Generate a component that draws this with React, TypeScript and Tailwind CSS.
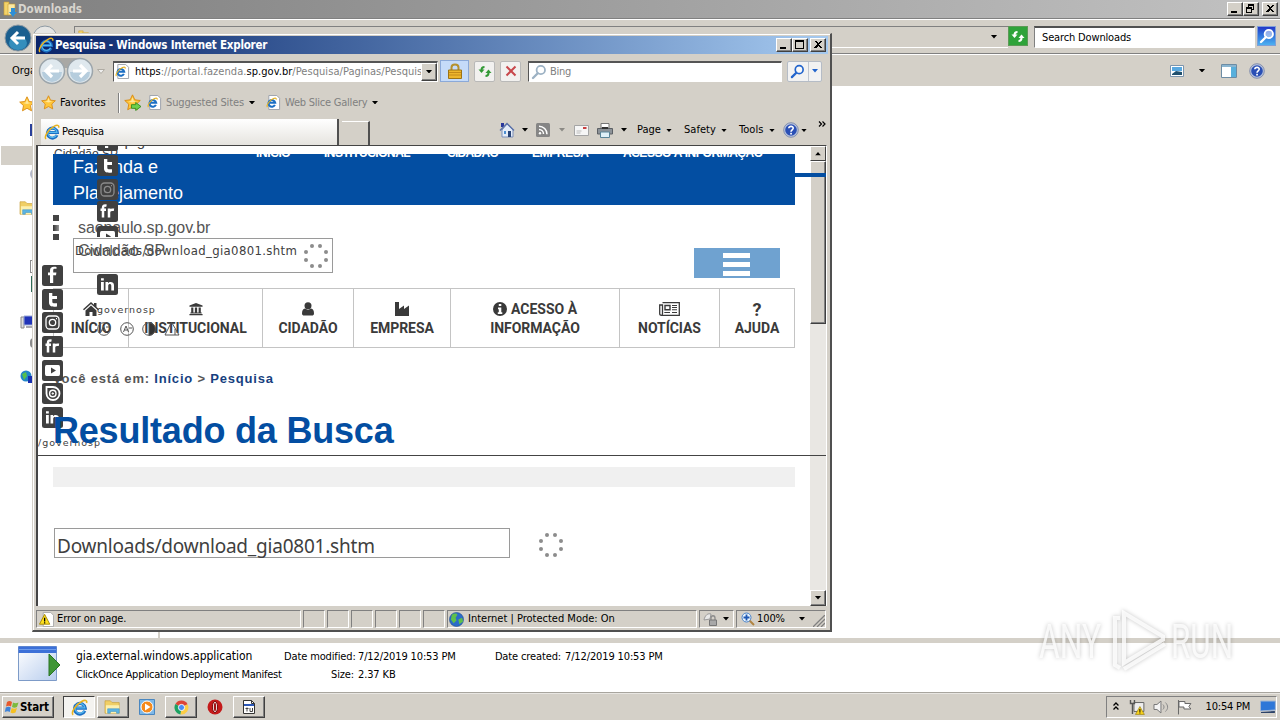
import type { ReactNode } from "react";
import clsx from "clsx";

type IconProps = { className?: string };

function IeIcon({ className }: IconProps) {
  return (
    <svg viewBox="0 0 16 16" className={clsx("shrink-0", className)}>
      <path d="M13 11.2A5 5 0 1 1 13.4 8.6H4.5" fill="none" stroke="#1c6fc4" strokeWidth="3" />
      <path d="M12.6 10.8A4.6 4.6 0 1 1 13 8.3H5" fill="none" stroke="#55b8ee" strokeWidth="1.2" />
      <path d="M2 15C-.5 12.5 5 5 10 2.300c3-1.600 5.500-1.300 4.600 1.400" fill="none" stroke="#e9b320" strokeWidth="1.500" />
    </svg>
  );
}

function IePageIcon({ className }: IconProps) {
  return (
    <svg viewBox="0 0 16 16" className={clsx("shrink-0", className)}>
      <path d="M3 .5h8.500l3 3v12H3z" fill="#fff" stroke="#9aa0aa" />
      <path d="M9.500 10.500A3.600 3.600 0 1 1 9.800 8.300H3.500" fill="none" stroke="#1c6fc4" strokeWidth="2.200" />
      <path d="M1.500 13C0 11 4 5.500 8 3.800c2-.8 3.300-.5 2.800 1.200" fill="none" stroke="#e9b320" strokeWidth="1.200" />
    </svg>
  );
}

function FolderIcon({ className }: IconProps) {
  return (
    <svg viewBox="0 0 16 16" className={clsx("shrink-0", className)}>
      <path d="M2 1h5v13H2z" fill="#f3d36b" stroke="#c99a2c" strokeWidth=".6" />
      <path d="M6 3h7v11H6z" fill="#fbe9a3" stroke="#c99a2c" strokeWidth=".6" />
      <path d="M9 7h4v4h2l-4 5-4-5h2z" fill="#2f8fd6" />
    </svg>
  );
}

function OpenFolderIcon({ className }: IconProps) {
  return (
    <svg viewBox="0 0 20 18" className={clsx("shrink-0", className)}>
      <path d="M1 2h6l2 2h8v12H1z" fill="#f0cf66" stroke="#c79b35" strokeWidth=".7" />
      <path d="M2 7h15v9H2z" fill="#fdf0ae" />
      <path d="M4 16v-5h13v5h-3v-2H7v2z" fill="#5db5e4" stroke="#3a8fc4" strokeWidth=".6" />
    </svg>
  );
}

function StarIcon({ className, add }: IconProps & { add?: boolean }) {
  return (
    <svg viewBox="0 0 16 16" className={clsx("shrink-0", className)}>
      <path d="M8 .8l2.200 4.700 5.100.6-3.800 3.500 1 5.200L8 12.300l-4.500 2.500 1-5.200L.7 6.100l5.100-.6z" fill="#ffc63a" stroke="#d98a13" strokeWidth=".9" />
      <path d="M8 3l1.300 3.500 2.700.4-4 1.100-4-1 2.700-.5z" fill="#ffe79a" />
      {add && <path d="M7 10h4V8l5 3.800-5 3.700v-2H7z" fill="#6fd04c" stroke="#2f8a1b" strokeWidth=".8" />}
    </svg>
  );
}

function HelpIcon({ className }: IconProps) {
  return (
    <svg viewBox="0 0 16 16" className={clsx("shrink-0", className)}>
      <circle cx="8" cy="8" r="7.300" fill="#b9c4dc" stroke="#7482a6" strokeWidth=".8" />
      <circle cx="8" cy="8" r="5.800" fill="#2a4fb5" />
      <path d="M5.800 6.300C6 3.600 10.400 3.800 10.200 6.300 10.100 7.800 8 7.900 8 9.700" fill="none" stroke="#fff" strokeWidth="1.600" />
      <rect x="7.200" y="10.800" width="1.700" height="1.700" fill="#fff" />
    </svg>
  );
}

function Caret({ className }: IconProps) {
  return (
    <svg viewBox="0 0 7 4" className={clsx("h-[3.500px] w-[6px] shrink-0", className)}>
      <path d="M0 0h7L3.500 4z" fill="currentColor" />
    </svg>
  );
}

function RefreshArrows({ className }: IconProps) {
  return (
    <svg viewBox="0 0 16 16" className={clsx("shrink-0", className)}>
      <path d="M7.500 4C5.500 4 4.500 5 4.500 7" fill="none" stroke="currentColor" strokeWidth="2" />
      <path d="M1.500 6.500h6L4.500 10z" fill="currentColor" />
      <path d="M8.500 13c2 0 3-1 3-3" fill="none" stroke="currentColor" strokeWidth="2" />
      <path d="M8.500 10h6l-3-3.500z" fill="currentColor" />
    </svg>
  );
}

function Magnifier({ className }: IconProps) {
  return (
    <svg viewBox="0 0 16 16" className={clsx("shrink-0", className)}>
      <path d="M7 9l-5 5" stroke="currentColor" strokeWidth="2.400" strokeLinecap="round" />
      <circle cx="9.800" cy="6" r="4.200" fill="#fff" fillOpacity=".5" stroke="currentColor" strokeWidth="1.800" />
    </svg>
  );
}

function WinButton({ kind, className }: { kind: "min" | "max" | "restore" | "close"; className?: string }) {
  return (
    <span
      className={clsx(
        "flex h-[14px] w-4 shrink-0 items-center justify-center border border-t-white border-r-[#404040] border-b-[#404040] border-l-white bg-[#d4d0c8] shadow-[inset_-1px_-1px_0_#808080]",
        className,
      )}
    >
      <svg viewBox="0 0 14 12" className="h-3 w-[14px]" shapeRendering="crispEdges">
        {kind === "min" && <path d="M3 8h6v2H3z" />}
        {kind === "max" && <path d="M2 1h9v9H2zM3 3v6h7V3z" fillRule="evenodd" />}
        {kind === "restore" && <path d="M4 1h6v6H8V6h1V3H5v1H4zM2 4h6v6H2zM3 6v3h4V6z" fillRule="evenodd" />}
        {kind === "close" && <path d="M3 2h2l2 2 2-2h2L8 5l3 4H9L7 7 5 9H3l3-4z" />}
      </svg>
    </span>
  );
}

function Explorer() {
  return (
    <div className="flex h-[694px] flex-col bg-[#d4d0c8]">
      <div className="flex h-[18px] items-center bg-linear-to-r from-[#808080] to-[#c2c2c2] pr-[2px] pl-[2px]">
        <FolderIcon className="size-4" />
        <span className="w-40 pt-px text-[11.500px] font-bold tracking-[0.020px] text-[#d8d5ce]">Downloads</span>
        <WinButton kind="min" className="ml-auto" />
        <WinButton kind="restore" />
        <WinButton kind="close" className="ml-[3px]" />
      </div>

      <div className="flex h-[37px] items-start border-t border-b border-t-[#808080] border-b-white px-[2px] shadow-[inset_0_1px_0_#fff,inset_0_-1px_0_#808080]">
        <svg viewBox="0 0 56 28" className="mt-[5px] h-7 w-14">
          <circle cx="16" cy="14" r="13" fill="#1b5f8f" stroke="#8e9aa4" />
          <ellipse cx="16" cy="19" rx="9" ry="7" fill="#3fa3cf" opacity=".7" />
          <path d="M23 14H10m6-6l-6 6 6 6" fill="none" stroke="#fff" strokeWidth="3" />
          <circle cx="43" cy="14" r="12" fill="#e6e6e4" stroke="#8e9aa4" />
        </svg>
        <div className="mt-[7px] ml-4 flex h-[22px] w-[934px] items-center border-t border-b border-l border-t-[#808080] border-b-white border-l-[#808080] pl-[2px] text-[11px]">
          <FolderIcon className="size-3.5" />
          <span className="ml-6 w-40 pt-[3px]">▸ admin ▸ Downloads ▸</span>
          <Caret className="mr-[10px] ml-auto h-1 w-[8px]" />
        </div>
        <span className="mt-[7px] flex h-5 w-5 items-center justify-center border border-[#5c9a57] bg-[#2fa33a] text-white">
          <RefreshArrows className="size-4" />
        </span>
        <div className="mt-[7px] ml-[6px] flex h-[22px] w-[221px] items-center border border-t-2 border-[#808080] border-r-white border-b-white border-t-[#505050] bg-white pl-[7px] text-[11px]">
          <span className="pt-px tracking-[-0.150px]">Search Downloads</span>
        </div>
        <span className="mt-[7px] ml-[2px] flex h-5 w-[19px] items-center justify-center border border-[#7e9fd6] bg-linear-to-b from-[#2536c8] to-[#4eb0f0] text-white">
          <Magnifier className="size-4" />
        </span>
      </div>

      <div className="flex h-[31px] items-center pr-[15px] pl-3 text-[11px]">
        <span className="pt-px">Organize</span>
        <svg viewBox="0 0 14 12" className="ml-auto h-3 w-[14px]">
          <path d="M.5.5h13v11H.5z" fill="#fff" stroke="#7c95ad" />
          <path d="M2 2h10v4H2z" fill="#58a8e0" />
          <path d="M2 9l4-3 6 1v3H2z" fill="#20506e" />
        </svg>
        <Caret className="mx-[14px] h-1 w-[8px]" />
        <svg viewBox="0 0 16 14" className="ml-[1px] h-[14px] w-4">
          <path d="M.5.5h15v13H.5z" fill="#fff" stroke="#6c8ca4" />
          <path d="M1 1h14v2H1z" fill="#8ab5d0" />
          <path d="M10 3h5v10h-5z" fill="#58b0dc" />
        </svg>
        <HelpIcon className="ml-3 size-4" />
      </div>

      <div className="flex grow bg-white">
        <div className="flex w-[160px] flex-col border-r-2 border-[#d4d0c8]">
          <StarIcon className="mt-[10px] ml-[19px] size-4" />
          <div className="mt-3 ml-[30px] h-3 w-4 bg-[#2a3f9a]" />
          <div className="mt-[10px] ml-px h-[19px] bg-[#d4d0c8]" />
          <div className="mt-[3px] ml-[30px] size-3 rounded-full bg-[#b4b8c8]" />
          <OpenFolderIcon className="mt-[20px] ml-[19px] h-4 w-[18px]" />
          <div className="mt-[44px] ml-[30px] h-[13px] w-3 border border-[#8c8c8c]" />
          <div className="mt-[3px] ml-[31px] h-4 w-3 bg-[#2f6b57]" />
          <svg viewBox="0 0 16 16" className="mt-[22px] ml-[20px] size-4">
            <path d="M1 3h3v11H1z" fill="#ddd" stroke="#888" />
            <path d="M4 2h11v9H4z" fill="#2033b8" stroke="#9cabd8" />
            <path d="M6 12h8v2H6z" fill="#a8a8b0" />
          </svg>
          <div className="mt-[8px] ml-[30px] size-2.5 rounded bg-[#8a8a8a]" />
          <svg viewBox="0 0 16 16" className="mt-[22px] ml-[20px] size-4">
            <circle cx="6" cy="6" r="5.500" fill="#2285c8" />
            <path d="M2 4l4-2 1 4-3 4z" fill="#58c04c" />
            <path d="M8 6h8v7H8z" fill="#1930b0" />
          </svg>
        </div>
      </div>

      <div className="h-[5px] bg-[#d4d0c8]" />
      <div className="flex h-[49px] bg-white text-[11px]">
        <svg viewBox="0 0 44 36" className="mt-[3px] ml-[18px] h-9 w-11">
          <defs>
            <linearGradient id="app-body" x1="0" y1="0" x2="1" y2="1">
              <stop offset="0" stopColor="#fff" />
              <stop offset="1" stopColor="#b8cdee" />
            </linearGradient>
          </defs>
          <path d="M.5.5h38v34H.5z" fill="url(#app-body)" stroke="#7d9bc8" />
          <path d="M.5.500h38V7H.5z" fill="#3c70d8" />
          <path d="M1 3h37v1H1z" fill="#6f9cea" />
          <path d="M31 8l11 11-11 11z" fill="#3f9636" stroke="#2b7425" />
        </svg>
        <div className="ml-[14px] flex w-[208px] flex-col pt-[4px]">
          <span className="h-[19px] text-[12px] leading-[18px] whitespace-nowrap tracking-[-0.030px]">gia.external.windows.application</span>
          <span className="h-[18px] leading-[18px] whitespace-nowrap tracking-[-0.270px]">ClickOnce Application Deployment Manifest</span>
        </div>
        <div className="grid grid-cols-[70px_132px_67px_120px] content-start gap-x-1 pt-[5px] leading-[18px] whitespace-nowrap tracking-[-0.130px]">
          <span className="text-right">Date modified:</span>
          <span>7/12/2019 10:53 PM</span>
          <span className="text-right">Date created:</span>
          <span>7/12/2019 10:53 PM</span>
          <span className="text-right">Size:</span>
          <span>2.37 KB</span>
        </div>
      </div>
      <div className="h-[2px] border-t border-[#a8a59e] bg-[#e8e6e2]" />
    </div>
  );
}

function TaskButton({ children, active, flat }: { children: ReactNode; active?: boolean; flat?: boolean }) {
  return (
    <span
      className={clsx(
        "flex h-[22px] w-[32px] items-center justify-center",
        active && "border border-t-[#404040] border-r-white border-b-white border-l-[#404040] bg-[#f4f3f0]",
        !active && !flat && "border border-t-white border-r-[#404040] border-b-[#404040] border-l-white shadow-[inset_-1px_-1px_0_#808080]",
      )}
    >
      {children}
    </span>
  );
}

function Taskbar() {
  return (
    <div className="flex h-[26px] items-start bg-[#d4d0c8] pt-[2px] pl-[2px]">
      <div className="flex h-[22px] w-[52px] items-center border border-t-white border-r-[#404040] border-b-[#404040] border-l-white pl-px shadow-[inset_-1px_-1px_0_#808080]">
        <svg viewBox="0 0 16 16" className="size-4 shrink-0">
          <path d="M3 3c2-1.500 3.500-1 5 0L7 7.500C5.500 6.500 4 6.500 2 7.500z" fill="#e8592b" />
          <path d="M9 3.500c1.500 1 3.500 1 5.500 0L13 8c-2 1-3.500.8-5 0z" fill="#7cba3c" />
          <path d="M1.800 8.500c2-1 3.500-1 5 0l-1 4.500c-1.500-1-3-1-5 0z" fill="#3f83d8" />
          <path d="M7.700 9c1.500 1 3.300 1 5.300 0l-1.500 4.500c-2 1-3.500 1-5 0z" fill="#f5c021" />
        </svg>
        <span className="pt-px text-[11.500px] font-bold tracking-[-0.100px]">Start</span>
      </div>
      <div className="ml-[9px] flex gap-[2px]">
        <TaskButton active><IeIcon className="size-[17px]" /></TaskButton>
        <TaskButton><OpenFolderIcon className="h-4 w-[18px]" /></TaskButton>
        <TaskButton flat>
          <svg viewBox="0 0 16 16" className="size-4">
            <path d="M.5.5h15v15H.5z" fill="#7db8e8" stroke="#4a87c0" />
            <circle cx="8" cy="8" r="6" fill="#f58a1c" stroke="#fff" />
            <path d="M6 4.500L11.500 8 6 11.500z" fill="#fff" />
          </svg>
        </TaskButton>
        <TaskButton>
          <svg viewBox="0 0 16 16" className="size-[15px]">
            <path d="M8 8L1.500 4.200A7.500 7.500 0 0 1 14.500 4.500z" fill="#dd4437" />
            <path d="M8 8L1.500 4.200a7.500 7.500 0 0 0 5.500 11.200z" fill="#1da261" />
            <path d="M8 8l6.500-3.500A7.500 7.500 0 0 1 7 15.400z" fill="#fccd44" />
            <circle cx="8" cy="8" r="3.300" fill="#4a8cf5" stroke="#fff" />
          </svg>
        </TaskButton>
        <TaskButton flat>
          <svg viewBox="0 0 16 16" className="size-4">
            <circle cx="8" cy="8" r="7.500" fill="#c41a1a" />
            <ellipse cx="8" cy="8" rx="2.600" ry="5.600" fill="#f2e6e6" stroke="#7c0b0b" />
            <ellipse cx="8" cy="8" rx="1.100" ry="4.200" fill="#a01212" />
          </svg>
        </TaskButton>
        <TaskButton>
          <svg viewBox="0 0 14 16" className="h-4 w-[14px]">
            <path d="M1.500 1.500h8l3 3v10h-11z" fill="#fff" stroke="#333" />
            <path d="M9.500 1.500v3h3" fill="none" stroke="#333" />
            <path d="M2 5h10v2H2z" fill="#2b57b8" />
            <path d="M3.500 9.500h3M5 8.500v4M8 9v3.500h2.500V9" fill="none" stroke="#444" />
          </svg>
        </TaskButton>
      </div>

      <div className="mr-[3px] ml-auto flex h-[22px] w-[171px] items-center border border-t-[#808080] border-r-white border-b-white border-l-[#808080] text-[11px]">
        <svg viewBox="0 0 6 8" className="mb-[3px] ml-[6px] h-2 w-[6px]">
          <path d="M.5 3.500L3 1l2.500 2.500M.5 7.500L3 5l2.500 2.500" fill="none" stroke="#000" strokeWidth="1.300" />
        </svg>
        <svg viewBox="0 0 16 16" className="ml-[10px] size-4">
          <path d="M5 3.500h10v9H5z" fill="#eee" stroke="#666" />
          <path d="M1.500 1v3.500h4V1M3.500 5v10" fill="none" stroke="#555" strokeWidth="1.400" />
          <path d="M11 7.500l4.500 8h-9z" fill="#f8d21c" stroke="#8c7408" strokeWidth=".6" />
          <path d="M11 10v3M11 13.500v1" stroke="#000" />
        </svg>
        <svg viewBox="0 0 16 16" className="ml-2 size-4">
          <path d="M1 5.500h3L8 2v12l-4-3.500H1z" fill="#f4f4f4" stroke="#777" />
          <path d="M10 5.500c1.500 1.500 1.500 3.500 0 5M12.500 3.500c3 3 3 6.500 0 9" fill="none" stroke="#888" />
        </svg>
        <svg viewBox="0 0 16 16" className="ml-[7px] size-4">
          <path d="M2.500 1v14.500M3 2.500h6v2h6l-2 3 2 2.500H8v-2H3z" fill="#fff" stroke="#666" />
        </svg>
        <span className="ml-[14px] w-[55px] pt-px whitespace-nowrap tracking-[-0.200px]">10:54 PM</span>
        <svg viewBox="0 0 16 14" className="h-[14px] w-4">
          <path d="M.5 1h15v9l-15 1z" fill="#2f77d8" stroke="#a0b5d4" />
          <path d="M1 12l14-1v2H1z" fill="#2b4268" />
        </svg>
      </div>
    </div>
  );
}

function BrowserChrome() {
  return (
    <>
      <div className="flex h-[18px] items-center bg-linear-to-r from-[#0a246a] to-[#a6caf0] pr-[2px] pl-[2px]">
        <IeIcon className="size-4" />
        <span className="ml-px pt-px text-[11.500px] font-bold whitespace-nowrap tracking-[-0.220px] text-white">
          Pesquisa - Windows Internet Explorer
        </span>
        <WinButton kind="min" className="ml-auto" />
        <WinButton kind="max" />
        <WinButton kind="close" className="ml-[2px]" />
      </div>

      <div className="flex h-[34px] items-center pl-[2px] text-[11px]">
        <svg viewBox="0 0 56 28" className="h-7 w-14 shrink-0">
          <path d="M14 1h28v10H14z" fill="#a9a8a5" />
          <circle cx="14" cy="14" r="12.500" fill="#dfe8ee" stroke="#9ca5ab" strokeWidth="1.500" />
          <circle cx="42" cy="14" r="12.500" fill="#dfe8ee" stroke="#9ca5ab" strokeWidth="1.500" />
          <path d="M4 15h20a10 10 0 0 1-20 0zM32 15h20a10 10 0 0 1-20 0z" fill="#b6cddd" />
          <path d="M21 14H8m6-6l-6 6 6 6M35 14h13m-6-6l6 6-6 6" fill="none" stroke="#fff" strokeWidth="3.200" />
        </svg>
        <svg viewBox="0 0 8 5" className="ml-[3px] h-[5px] w-2 shrink-0">
          <path d="M.5.500h7L4 4.500z" fill="#eee" stroke="#b0aca4" />
        </svg>
        <div className="ml-2 flex h-[21px] w-[325px] shrink-0 items-center border border-t-2 border-[#555] border-r-white border-b-white bg-white pl-px">
          <IePageIcon className="size-[15px]" />
          <span className="ml-[5px] w-[286px] overflow-hidden pt-px whitespace-nowrap tracking-[0.050px] text-[#808080]">
            <span className="text-black">https</span>://portal.fazenda.<span className="text-black">sp.gov.br</span>/Pesquisa/Paginas/Pesquisa
          </span>
          <span className="flex h-[18px] w-4 shrink-0 items-center justify-center border border-t-white border-r-[#404040] border-b-[#404040] border-l-white bg-[#d4d0c8] shadow-[inset_-1px_-1px_0_#808080]">
            <Caret className="h-1 w-[8px]" />
          </span>
        </div>
        <span className="ml-[2px] flex h-[22px] w-[29px] items-center justify-center border border-[#8ba9d8] bg-[#c5dbf9]">
          <svg viewBox="0 0 14 16" className="h-4 w-[14px]">
            <path d="M3.500 8V4.500c0-4 7-4 7 0V8" fill="none" stroke="#b5902c" strokeWidth="2" />
            <path d="M.5 7h13v8.500H.5z" fill="#edb62c" stroke="#9c7416" />
            <path d="M1 9.500h12M1 12h12" stroke="#c48a18" />
          </svg>
        </span>
        <span className="ml-[5px] flex h-[21px] w-[21px] items-center justify-center rounded-xs border border-[#b9b9b8] bg-[#f2f1ef] text-[#339a36]">
          <RefreshArrows className="size-4" />
        </span>
        <span className="ml-[5px] flex h-[21px] w-[21px] items-center justify-center rounded-xs border border-[#b9b9b8] bg-[#f2f1ef]">
          <svg viewBox="0 0 12 12" className="size-3">
            <path d="M1.500 1.500l9 9M10.500 1.500l-9 9" stroke="#c8484c" strokeWidth="2" />
          </svg>
        </span>
        <div className="ml-[7px] flex h-[21px] w-[254px] items-center border border-t-2 border-[#555] border-r-white border-b-white bg-white pl-[2px] text-[#808080]">
          <Magnifier className="size-4 text-[#9db2c4]" />
          <span className="ml-[3px] pt-px tracking-[-0.300px]">Bing</span>
        </div>
        <span className="ml-[5px] flex h-[21px] w-[35px] items-center rounded-xs border border-[#b5bcc6] bg-[#f2f2f2] text-[#2264cc]">
          <Magnifier className="ml-[2px] size-[15px]" />
          <span className="ml-[3px] h-full w-px bg-[#c0c6d0]" />
          <Caret className="ml-[3px]" />
        </span>
      </div>

      <div className="flex h-[29px] items-center pl-[5px] text-[11px] text-[#808080]">
        <StarIcon className="size-[15px]" />
        <span className="ml-[4px] w-[58px] pt-px tracking-[0.130px] text-black">Favorites</span>
        <span className="h-5 w-px bg-[#808080] shadow-[1px_0_0_#fff]" />
        <StarIcon add className="ml-[5px] size-[17px]" />
        <IePageIcon className="ml-[6px] size-[15px]" />
        <span className="ml-[4px] w-[83px] pt-px whitespace-nowrap tracking-[-0.130px]">Suggested Sites</span>
        <Caret className="text-black" />
        <IePageIcon className="ml-[11px] size-[15px]" />
        <span className="ml-[4px] w-[87px] pt-px whitespace-nowrap tracking-[-0.230px]">Web Slice Gallery</span>
        <Caret className="text-black" />
      </div>

      <div className="flex h-[28px] items-end pl-[5px] text-[11px]">
        <div className="flex h-[26px] w-[298px] shrink-0 items-center border-r-2 border-[#505050] bg-linear-to-b from-white to-[#e6e4df] pl-[3px]">
          <IeIcon className="size-4" />
          <span className="ml-[2px] pt-px tracking-[-0.200px]">Pesquisa</span>
        </div>
        <div className="ml-[3px] h-[24px] w-[28px] shrink-0 border-t border-r-2 border-t-white border-r-[#505050]" />
        <div className="mb-px ml-[129px] flex h-[28px] w-[330px] items-center">
          <svg viewBox="0 0 16 16" className="size-4">
            <path d="M2 1h3v4H2z" fill="#28379c" />
            <path d="M3 8l5-6 6 6v7H3z" fill="#e4ecf8" stroke="#7c8fb8" />
            <path d="M1 8.500L8 1.500l7 7" fill="none" stroke="#5a71a8" strokeWidth="1.400" />
            <path d="M9 9h3v6H9z" fill="#294478" />
            <path d="M5 9h2v3H5z" fill="#4f8fd0" />
          </svg>
          <Caret className="ml-[7px]" />
          <svg viewBox="0 0 14 14" className="ml-[8px] size-[14px]">
            <rect width="14" height="14" rx="1.500" fill="#858585" />
            <path d="M3 6.500a4.500 4.500 0 0 1 4.500 4.500M3 3.200a8 8 0 0 1 8 8" fill="none" stroke="#fff" strokeWidth="1.500" />
            <circle cx="4" cy="10.200" r="1.200" fill="#fff" />
          </svg>
          <Caret className="ml-[9px] text-[#8c8a85]" />
          <svg viewBox="0 0 15 11" className="ml-[9px] h-[11px] w-[15px]">
            <path d="M.5.500h14v10H.5z" fill="#f6f6f6" stroke="#a5a5a5" />
            <path d="M9 2h3.500v2H9z" fill="#c84040" />
            <path d="M2.500 6h5M2.500 8h4" stroke="#bbb" />
          </svg>
          <svg viewBox="0 0 16 16" className="ml-[8px] size-4">
            <path d="M4 1.500h8V6H4z" fill="#fff" stroke="#777" />
            <path d="M.5 6.500h15V12H.5z" fill="#8c9298" stroke="#5c6065" />
            <path d="M3.500 10h9v5.500h-9z" fill="#dff0f8" stroke="#5a8498" />
            <path d="M5 5h6v2H5z" fill="#333" />
          </svg>
          <Caret className="ml-[8px]" />
          <span className="ml-[10px] w-[29px] tracking-[-0.050px]">Page</span>
          <Caret className="h-[3px] w-[5px]" />
          <span className="ml-[12px] w-[37px] tracking-[0.050px]">Safety</span>
          <Caret className="h-[3px] w-[5px]" />
          <span className="ml-[12px] w-[30px] tracking-[0.050px]">Tools</span>
          <Caret className="h-[3px] w-[5px]" />
          <HelpIcon className="ml-[8px] size-4" />
          <Caret className="ml-[2px] h-[3px] w-[5px]" />
          <svg viewBox="0 0 8 6" className="mb-3 ml-[11px] h-[6px] w-2">
            <path d="M1 .5L3.500 3 1 5.500M4.500.500L7 3 4.500 5.500" fill="none" stroke="#000" strokeWidth="1.200" />
          </svg>
        </div>
      </div>
    </>
  );
}

function SocialIcon({ name, className }: { name: string; className?: string }) {
  return (
    <svg viewBox="0 0 21 21" className={clsx("size-[21px] shrink-0", className)}>
      <rect width="21" height="21" rx="2.500" fill="#404040" />
      {name === "facebook" && <path d="M14.500 3.800h-2c-1 0-1.300.6-1.300 1.500v2.200h3.200l-.4 2.800h-2.800V18H8v-7.700H6V7.500h2V5.500c0-2.700 1.500-3.800 3.900-3.800 1 0 2.600.2 2.600.2z" fill="#fff" />}
      {name === "twitter" && <path d="M7 4h3.300v3H15v3h-4.700v2.500c0 1.800 1 2 4.700 1.800V17.500c-5 .6-8 0-8-4.200z" fill="#fff" />}
      {name === "instagram" && (
        <g fill="none" stroke="currentColor">
          <rect x="4" y="4" width="13" height="13" rx="3.500" strokeWidth="1.300" />
          <circle cx="10.500" cy="10.500" r="3.200" strokeWidth="1.300" />
          <path d="M14 6.700h1" strokeWidth="1.200" />
        </g>
      )}
      {name === "youtube" && <path d="M4.500 5h12Q18 5 18 7v7q0 2-1.500 2h-12Q3 16 3 14V7q0-2 1.500-2zM9 7.500v6l5-3z" fill="#fff" fillRule="evenodd" />}
      {name === "issuu" && (
        <g fill="none" stroke="#fff">
          <path d="M4.500 4h6.500a6.500 6.500 0 1 1-6.500 6.500z" strokeWidth="1.800" />
          <circle cx="10.800" cy="10.500" r="3.200" strokeWidth="1.400" />
          <circle cx="10.800" cy="10.500" r=".7" fill="#fff" />
        </g>
      )}
      {name === "flickr" && <path d="M9.500 4.700C7 4 6 5 6 7v9.500M3.500 8.700h5.500M12 16.500V7.500M12 11.500c.2-2 1.500-3.300 5-2.700" fill="none" stroke="#fff" strokeWidth="2.500" />}
      {name === "linkedin" && (
        <g fill="#fff">
          <path d="M4 8h2.800v8.500H4zM4 4.300h2.800v2.300H4z" />
          <path d="M8.500 8H11v1.300c1.500-2.300 6-1.800 6 1.900v5.300h-2.700v-4.800c0-2.400-3.100-2.200-3.100 0v4.800H8.500z" />
        </g>
      )}
    </svg>
  );
}

function Spinner({ className }: IconProps) {
  return (
    <svg viewBox="0 0 26 26" className={className} fill="#8c8c8c">
      <circle cx="9" cy="3" r="2" />
      <circle cx="17" cy="3" r="2" />
      <circle cx="23" cy="9" r="2" />
      <circle cx="23" cy="17" r="2" />
      <circle cx="17" cy="23" r="2" />
      <circle cx="9" cy="23" r="2" />
      <circle cx="3" cy="17" r="2" />
      <circle cx="3" cy="9" r="2" />
    </svg>
  );
}

const socials = ["facebook", "twitter", "instagram", "flickr", "youtube", "issuu", "linkedin"];

const HomeIcon = () => (
  <svg viewBox="0 0 16 14" className="h-[14px] w-4" fill="#3a3a3a">
    <path d="M8 0l3 2.800V1h2.500v4L16 7.300l-1 1L8 2 1 8.300l-1-1z" />
    <path d="M8 3.500l5.500 5V14H9.500v-4h-3v4h-4V8.500z" />
  </svg>
);

const BankIcon = () => (
  <svg viewBox="0 0 16 14" className="h-[14px] w-[14px]" fill="#3a3a3a">
    <path d="M8 0l7.500 3v1.300H.5V3zM2.500 5.300H5V11H2.500zM6.700 5.300h2.600V11H6.700zM11 5.300h2.500V11H11zM1.500 11h13v1h-13zM.5 12.700h15V14H.5z" />
  </svg>
);

const UserIcon = () => (
  <svg viewBox="0 0 12 14" className="h-[14px] w-3" fill="#3a3a3a">
    <circle cx="6" cy="3.800" r="3.500" />
    <path d="M0 11.500C0 8.500 1 7 3 6.500c2 1.500 4 1.500 6 0 2 .5 3 2 3 5 0 1.500-1 2-2 2H2c-1 0-2-.5-2-2z" />
  </svg>
);

const IndustryIcon = () => (
  <svg viewBox="0 0 15 14" className="h-[14px] w-[15px]" fill="#3a3a3a">
    <path d="M0 0h4v7l5-3.500V7l5-3.500V14H0z" />
  </svg>
);

const NewsIcon = () => (
  <svg viewBox="0 0 21 14" className="h-[14px] w-[21px]" fill="none" stroke="#3a3a3a">
    <path d="M3.500.7h16.800v12.600H2.500C1 13.300.7 12.500.7 11.500V3h2.800v8.500c0 1-.5 1.800-1 1.800" strokeWidth="1.300" />
    <path d="M6 3.500h5v4.200H6z" strokeWidth="1.400" />
    <path d="M13 3.500h5M13 5.500h5M13 7.700h5M5.300 10.500H11M13 10.500h5" strokeWidth="1.100" />
  </svg>
);

const InfoIcon = () => (
  <svg viewBox="0 0 14 14" className="h-[14px] w-[14px]">
    <circle cx="7" cy="7" r="7" fill="#3a3a3a" />
    <path d="M5.800 2h2.500v2H5.800zM5 5.500h3.300v4.800h1V12H4.800v-1.700h1V7.200H5z" fill="#fff" />
  </svg>
);

const tabs = [
  { label: "INÍCIO", icon: <HomeIcon />, width: "w-[75px]" },
  { label: "INSTITUCIONAL", icon: <BankIcon />, width: "w-[134px]" },
  { label: "CIDADÃO", icon: <UserIcon />, width: "w-[91px]" },
  { label: "EMPRESA", icon: <IndustryIcon />, width: "w-[97px]" },
  { label: "INFORMAÇÃO", icon: <><InfoIcon /><span className="ml-1">ACESSO À</span></>, width: "w-[169px]" },
  { label: "NOTÍCIAS", icon: <NewsIcon />, width: "w-[100px]" },
  { label: "AJUDA", icon: <span className="text-[18px]">?</span>, width: "w-[75px]" },
];

function Page() {
  return (
    <div className="relative h-[460px] w-[772px] overflow-hidden bg-white font-['Liberation_Sans',sans-serif] text-[#404040]">
      {/* main column */}
      <div className="flex flex-col pl-[15px]">
        <div className="mt-2 h-[51px] w-[742px] bg-[#034ea2] pl-5 text-[18px] leading-[26px] text-white">
          <p className="w-32">Fazenda e Planejamento</p>
        </div>
        <div className="mt-[33px] flex h-[50px] w-[742px] items-start pr-[15px] pl-5">
          <div className="h-[35px] w-[260px] border border-[#9a9a9a] pt-[2px] pl-px font-['DejaVu_Sans_Condensed','DejaVu_Sans',sans-serif] text-[13px] whitespace-nowrap tracking-[0.350px]">
            Downloads/download_gia0801.shtm
          </div>
          <div className="mt-[10px] ml-auto flex h-[30px] w-[86px] flex-col items-center gap-1 bg-[#6fa2d0] pt-[5px] pr-px">
            <span className="h-[5px] w-[27px] bg-white" />
            <span className="h-[5px] w-[27px] bg-white" />
            <span className="h-[5px] w-[27px] bg-white" />
          </div>
        </div>

        <ul className="flex h-[60px] w-[742px] border border-[#c4c4c4] font-[Roboto,sans-serif] text-[14px] font-bold text-[#3a3a3a]">
          {tabs.map((tab) => (
            <li key={tab.label} className={clsx("flex shrink-0 flex-col items-center border-r border-[#c4c4c4] pt-[10px]", tab.width)}>
              <span className="flex h-5 items-center">{tab.icon}</span>
              <span className="leading-[19px] tracking-[-0.050px]">{tab.label}</span>
            </li>
          ))}
        </ul>

        <p className="mt-[21px] h-5 text-[13px] leading-5 font-bold whitespace-nowrap tracking-[0.800px] text-[#555]">
          Você está em: <a className="text-[#173f80]">Início</a> &gt; <a className="text-[#173f80]">Pesquisa</a>
        </p>
        <h1 className="relative z-10 mt-[20px] h-[44px] text-[36px] leading-[44px] font-bold whitespace-nowrap tracking-[-0.200px] text-[#034ea2]">
          Resultado da Busca
        </h1>
        <div className="mt-[14px] h-[20px] w-[742px] bg-[#f0f0f0]" />
        <div className="mt-[41px] ml-px flex items-center">
          <div className="h-[30px] w-[456px] border border-[#9a9a9a] pl-[2px] font-['Noto_Sans',sans-serif] text-[19px] leading-[34px] whitespace-nowrap tracking-[-0.220px]">
            Downloads/download_gia0801.shtm
          </div>
          <Spinner className="mt-[3px] ml-[28px] size-[26px]" />
        </div>
      </div>

      {/* collapsed site menu, cut by the top of the blue bar */}
      <div className="absolute top-[2px] left-[218px] flex gap-[35px] text-[12px] leading-[10px] font-bold whitespace-nowrap text-white">
        <span className="w-[33px] tracking-[-0.400px]">INÍCIO</span>
        <span className="w-[88px] tracking-[-0.500px]">INSTITUCIONAL</span>
        <span className="w-[50px] tracking-[-0.700px]">CIDADÃO</span>
        <span className="w-[56px] tracking-[-0.400px]">EMPRESA</span>
        <span className="tracking-[-0.480px]">ACESSO À INFORMAÇÃO</span>
      </div>
      <div className="absolute top-0 left-4 h-2 overflow-hidden text-[12px] whitespace-nowrap">
        <p className="-mt-[12px] h-[14px] text-[15px] leading-[14px] tracking-[-0.200px]">saopaulo.sp.gov.br</p>
        <p className="leading-[13px]">Cidadão SP</p>
      </div>
      <div className="absolute top-[69px] left-[15px] flex flex-col gap-[3.500px]">
        <span className="size-[6px] bg-[#444]" />
        <span className="size-[6px] bg-linear-to-r from-[#333] to-[#999]" />
        <span className="size-[6px] bg-[#444]" />
      </div>
      <div className="absolute top-[70px] left-10 text-[16px] leading-[23px] whitespace-nowrap text-[#555]">
        <p className="tracking-[-0.100px]">saopaulo.sp.gov.br</p>
        <p className="tracking-[0.200px]">Cidadão SP</p>
      </div>
      <Spinner className="absolute top-[97px] left-[265px] size-[26px]" />

      <div className="absolute top-[-16px] left-[59px] flex flex-col">
        <SocialIcon name="facebook" />
        <SocialIcon name="twitter" className="mt-[4px]" />
        <SocialIcon name="instagram" className="mt-[3px] text-[#8a8a8a]" />
        <SocialIcon name="flickr" className="mt-px" />
        <div className="mt-[4px] h-[11px] overflow-hidden">
          <SocialIcon name="youtube" />
        </div>
        <SocialIcon name="linkedin" className="mt-[37px]" />
        <span className="mt-[9px] font-['DejaVu_Sans',sans-serif] text-[9.500px] leading-3 tracking-[1px]">governosp</span>
        <svg viewBox="0 0 84 14" className="mt-[6px] h-[14px] w-[84px]" fill="none" stroke="#555">
          <circle cx="7" cy="7" r="6.300" />
          <path d="M4 10l2.500-6L9 10M5 8h3M9 5h3" />
          <circle cx="30" cy="7" r="6.300" />
          <path d="M26.500 10L29 4l2.500 6M27.500 8h3M32 6h3" />
          <circle cx="52" cy="7" r="6.300" />
          <path d="M52 .7a6.300 6.300 0 0 1 0 12.600z" fill="#333" />
          <path d="M68 13L74 1h1l7 12zM78 13V7" />
        </svg>
      </div>

      <div className="absolute top-[119px] left-[4px] flex flex-col gap-[2.700px] text-white">
        {socials.map((name) => (
          <SocialIcon key={name} name={name} />
        ))}
      </div>
      <span className="absolute top-[291px] left-0 font-['DejaVu_Sans',sans-serif] text-[9.500px] leading-3 tracking-[1px]">/governosp</span>
    </div>
  );
}

function Scrollbar() {
  return (
    <div className="flex h-[460px] w-4 flex-col bg-[#e9e7e3]">
      <span className="flex h-[15px] items-center justify-center border border-white border-r-[#404040] border-b-[#404040] bg-[#d4d0c8]">
        <Caret className="rotate-180" />
      </span>
      <span className="h-[163px] border border-t-white border-r-[#404040] border-b-[#404040] border-l-white bg-[#d4d0c8] shadow-[inset_-1px_-1px_0_#808080]" />
      <span className="mt-auto flex h-4 items-center justify-center border border-white border-r-[#404040] border-b-[#404040] bg-[#d4d0c8] shadow-[inset_-1px_-1px_0_#808080]">
        <Caret className="h-1 w-[8px]" />
      </span>
    </div>
  );
}

function StatusCell({ className, children }: { className: string; children?: ReactNode }) {
  return (
    <span className={clsx("flex h-[18px] shrink-0 items-center border border-t-[#808080] border-r-white border-b-white border-l-[#808080]", className)}>
      {children}
    </span>
  );
}

function StatusBar() {
  return (
    <div className="mt-[4px] flex gap-[2px] text-[11px] whitespace-nowrap">
      <StatusCell className="w-[265px]">
        <svg viewBox="0 0 16 16" className="ml-[2px] size-[15px]">
          <path d="M4.500.5h8l3 3v12h-11z" fill="#fff" stroke="#aaa" />
          <path d="M6 2.500L11.500 13H.5z" fill="#ffe21e" stroke="#a88a08" />
          <path d="M6 6v4M6 11v1.300" stroke="#000" strokeWidth="1.400" />
        </svg>
        <span className="ml-[3px] pt-px tracking-[-0.080px]">Error on page.</span>
      </StatusCell>
      <StatusCell className="w-[22px]" />
      <StatusCell className="w-[22px]" />
      <StatusCell className="w-[22px]" />
      <StatusCell className="w-[22px]" />
      <StatusCell className="w-[22px]" />
      <StatusCell className="w-[22px]" />
      <StatusCell className="w-[250px]">
        <svg viewBox="0 0 16 16" className="ml-px size-[15px]">
          <circle cx="8" cy="8" r="7.500" fill="#2b6cc8" stroke="#1c4a8c" strokeWidth=".6" />
          <path d="M3 3c3-2 5-2 6 0L7 6l1 3-3 3-3-4zM10 8l4-2 1 4-4 3z" fill="#5fc04a" />
        </svg>
        <span className="ml-[4px] pt-px">Internet | Protected Mode: On</span>
      </StatusCell>
      <StatusCell className="w-[35px]">
        <svg viewBox="0 0 16 14" className="ml-[3px] h-[14px] w-4">
          <path d="M1 8C2 3 5 1 8 2l-1 5z" fill="#e8e8e8" stroke="#999" />
          <path d="M8 8V6c0-3 4-3 4 0v2" fill="none" stroke="#8c8c8c" strokeWidth="1.300" />
          <path d="M6.500 8h7v5.500h-7z" fill="#a8a8a8" stroke="#777" />
        </svg>
        <Caret className="ml-[4px]" />
      </StatusCell>
      <StatusCell className="w-[90px]">
        <svg viewBox="0 0 14 14" className="ml-[4px] size-[14px]">
          <path d="M8 8l5 5" stroke="#b08440" strokeWidth="2" />
          <circle cx="5.500" cy="5.500" r="4.500" fill="#e8f4fd" stroke="#4a82c8" />
          <path d="M5.500 2.500v6M2.500 5.500h6" stroke="#1e58b4" strokeWidth="1.800" />
        </svg>
        <span className="ml-[2px] w-[42px] pt-px tracking-[-0.100px]">100%</span>
        <Caret className="w-[5px]" />
        <svg viewBox="0 0 12 12" className="mt-1 ml-auto size-3">
          <path d="M0 12L12 0M4 12l8-8M8 12l4-4" stroke="#808080" strokeWidth="1.300" />
        </svg>
      </StatusCell>
    </div>
  );
}

function InternetExplorer() {
  return (
    <div className="absolute top-[33px] left-8 h-[599px] w-[800px] border border-[#d4d0c8] border-r-2 border-b-2 border-r-[#505050] border-b-[#505050] bg-[#d4d0c8] pt-[2px] pr-[2px] pl-[3px] shadow-[inset_1px_1px_0_#fff]">
      <BrowserChrome />
      <div className="relative flex h-[461px] w-[791px] border-t border-r border-l-2 border-[#444] border-r-white">
        <Page />
        <Scrollbar />
        {/* rules that run past the page, over the scrollbar */}
        <div className="absolute top-[27px] right-0 h-1 w-8 bg-[#034ea2]" />
        <div className="absolute top-[309px] left-0 h-px w-full bg-[#444]" />
      </div>
      <StatusBar />
    </div>
  );
}

function Watermark() {
  return (
    <svg viewBox="0 0 204 80" className="absolute top-[602px] left-[1034px] h-20 w-[204px] drop-shadow-[0_0_2px_rgba(0,0,0,0.280)]">
      <g fill="#fff" fillOpacity=".8" className="font-[Roboto,sans-serif] text-[48px]">
        <text x="5" y="56" textLength="62" lengthAdjust="spacingAndGlyphs">ANY</text>
        <text x="137" y="56" textLength="62" lengthAdjust="spacingAndGlyphs">RUN</text>
      </g>
      <g fill="none" stroke="#fff" strokeOpacity=".8" strokeWidth="4">
        <path d="M90 11l39 23.500v3L90 61z" />
        <path d="M86 16h-5v47l5 3M131 42L90 67" />
      </g>
    </svg>
  );
}

export default function App() {
  return (
    <div className="relative h-[720px] w-[1280px] overflow-hidden bg-[#d4d0c8] font-['DejaVu_Sans_Condensed','DejaVu_Sans',sans-serif] text-black">
      <Explorer />
      <Taskbar />
      <InternetExplorer />
      <Watermark />
    </div>
  );
}
